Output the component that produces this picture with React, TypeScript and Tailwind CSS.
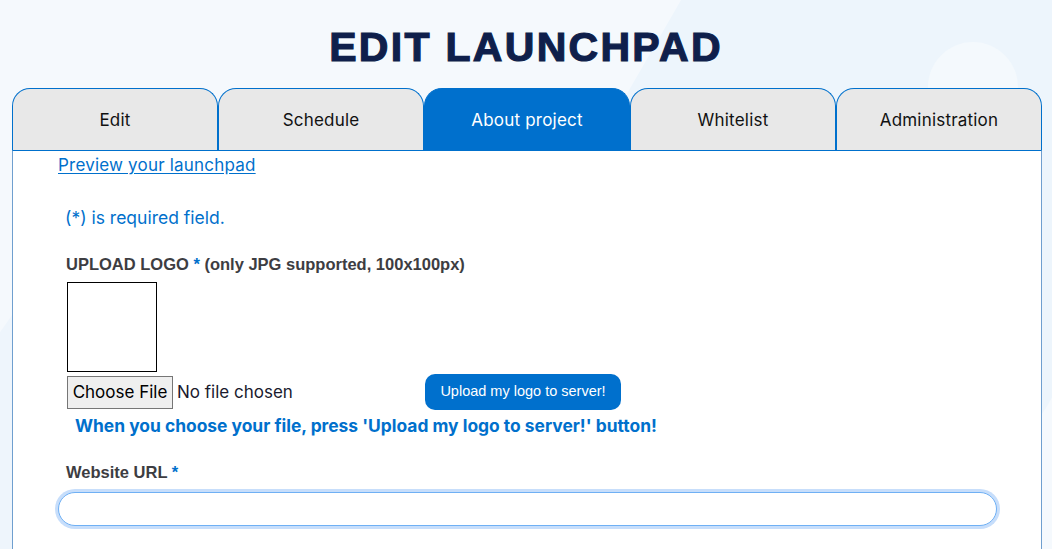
import React from "react";

const tabs = ["Edit", "Schedule", "About project", "Whitelist", "Administration"];

export default function App() {
    const active = "About project";

    return (
        <div className="relative w-full h-[549px] overflow-hidden bg-[#f5f9fd] font-['Inter',sans-serif]">
            {/* faint background shapes */}
            <div className="absolute -right-[120px] -top-[140px] w-[520px] h-[520px] rotate-[30deg] rounded-[80px] bg-[#edf5fc]" />
            <div className="absolute left-[928px] top-[42px] w-[90px] h-[90px] rounded-full bg-[#f4f9fd]" />
            <div className="absolute -left-[60px] top-[240px] w-[140px] h-[400px] rotate-[35deg] bg-[#eef5fc]" />

            <div className="relative flex flex-col items-center">
                <h1 className="mt-[27px] h-[40px] leading-[40px] text-[41px] font-black tracking-[2.3px] text-[#0f1f4b] [-webkit-text-stroke:1.2px_#0f1f4b] font-['Liberation_Sans',Arial,sans-serif]">
                    EDIT LAUNCHPAD
                </h1>

                {/* Tabs */}
                <div className="mt-[21px] w-[1030px] flex self-start ml-[12px]">
                    {tabs.map((tab) => (
                        <div
                            key={tab}
                            className={`w-[206px] h-[62px] pt-[2px] flex items-center justify-center rounded-t-[18px] border border-b-0 border-[#0070cc] text-[17px] tracking-[0.2px] ${
                                tab === active ? "bg-[#0070cd] text-white" : "bg-[#e8e8e8] text-[#111]"
                            }`}
                        >
                            {tab}
                        </div>
                    ))}
                </div>

                {/* Panel */}
                <div className="w-[1030px] self-start ml-[12px] h-[420px] bg-white border-t border-t-[#0070cc] border-x border-x-[#6f9fcf] pl-[45px] pr-[44px]">
                    <a href="#" className="block mt-[3px] text-[17px] leading-[22px] tracking-[0.2px] text-[#0070cc] underline underline-offset-2">
                        Preview your launchpad
                    </a>

                    <p className="mt-[30px] ml-[7px] text-[17.5px] leading-[24px] text-[#0070cc]">
                        (*) is required field.
                    </p>

                    <div className="mt-[24px] ml-[8px] text-[16.5px] leading-[20px] font-bold text-[#3d3d42] font-['Liberation_Sans',Arial,sans-serif]">
                        UPLOAD LOGO <span className="text-[#0070cc]">*</span> (only JPG supported, 100x100px)
                    </div>

                    <div className="mt-[8px] ml-[9px] w-[90px] h-[90px] border border-black bg-white" />

                    <div className="ml-[9px] mt-[1px] flex items-start">
                        <div className="w-[358px] pt-[3px] flex items-center">
                            <button className="h-[33px] w-[106px] bg-[#efefef] border border-[#767676] text-[17px] text-black">
                                Choose File
                            </button>
                            <span className="ml-[4px] text-[17px] text-[#1a1a2e]">No file chosen</span>
                        </div>
                        <button className="mt-[1px] h-[36px] w-[196px] rounded-[10px] bg-[#0070cd] text-white text-[14.5px] font-['Liberation_Sans',Arial,sans-serif]">
                            Upload my logo to server!
                        </button>
                    </div>

                    <p className="mt-[4px] ml-[17px] text-[17.4px] leading-[24px] font-bold text-[#0070cc]">
                        When you choose your file, press 'Upload my logo to server!' button!
                    </p>

                    <div className="mt-[24px] ml-[8px] text-[16.5px] leading-[20px] font-bold text-[#3d3d42] font-['Liberation_Sans',Arial,sans-serif]">
                        Website URL <span className="text-[#0070cc]">*</span>
                    </div>

                    <input
                        type="text"
                        className="mt-[10px] block w-full h-[34px] rounded-full border border-[#6fb0f4] ring-[3px] ring-[#c7defb] outline-none bg-white"
                    />
                </div>
            </div>
        </div>
    );
}
